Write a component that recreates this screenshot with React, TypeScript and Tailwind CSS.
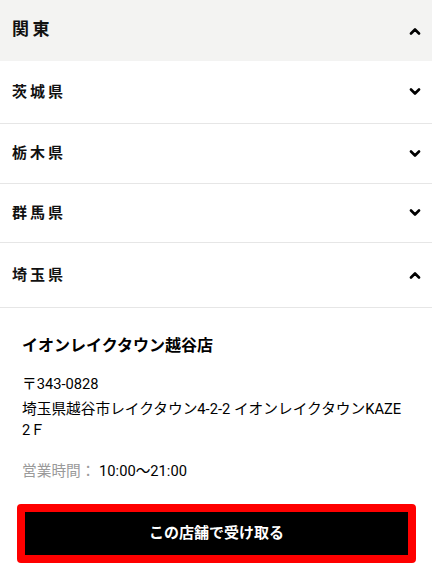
import React from 'react';

const Chevron: React.FC<{ up?: boolean }> = ({ up }) => (
  <svg width="12" height="8" viewBox="0 0 12 8" className="shrink-0">
    <polyline
      points={up ? '2,6.5 6,2.5 10,6.5' : '2,1.5 6,5.5 10,1.5'}
      fill="none"
      stroke="#000"
      strokeWidth="2.6"
      strokeLinecap="round"
      strokeLinejoin="round"
    />
  </svg>
);

const Row: React.FC<{ label: string; h: string; up?: boolean }> = ({ label, h, up }) => (
  <div className={`flex items-center justify-between border-b border-[#e6e6e6] pl-3 pr-[11px] ${h}`}>
    <span className="text-[15px] font-bold tracking-[0.2em] text-[#111]">{label}</span>
    <Chevron up={up} />
  </div>
);

const App: React.FC = () => {
  return (
    <div
      className="w-[432px] min-h-[576px] bg-white text-black"
      style={{ fontFamily: 'Roboto, "Noto Sans CJK JP", sans-serif' }}
    >
      <div className="flex h-[61px] items-center justify-between bg-[#f3f3f2] pl-3 pr-[11px]">
        <span className="-mt-[2px] text-[17px] font-bold tracking-[0.2em] text-[#111]">関東</span>
        <Chevron up />
      </div>
      <Row label="茨城県" h="h-[63px]" />
      <Row label="栃木県" h="h-[60px]" />
      <Row label="群馬県" h="h-[59px]" />
      <Row label="埼玉県" h="h-[65px]" up />

      <div className="px-[22px] pt-[26px]">
        <p className="text-[16px] font-bold leading-[24px]">イオンレイクタウン越谷店</p>
        <p className="mt-[15px] text-[14.7px] leading-[22px]">〒343-0828</p>
        <p className="mt-[4px] text-[14.7px] leading-[21px]">
          埼玉県越谷市レイクタウン4-2-2 イオンレイクタウンKAZE
          <br />
          2Ｆ
        </p>
        <p className="mt-[19px] text-[14.7px] leading-[22px]">
          <span className="text-[#9a9a9a]">営業時間：</span> 10:00〜21:00
        </p>
      </div>

      <div className="pl-[17px] pr-[16px] pt-[22px]">
        <button
          type="button"
          className="flex h-[59px] w-full items-center justify-center rounded-[4px] border-[8px] border-[#ff0000] bg-black text-[15px] font-bold text-white"
        >
          この店舗で受け取る
        </button>
      </div>
    </div>
  );
};

export default App;
